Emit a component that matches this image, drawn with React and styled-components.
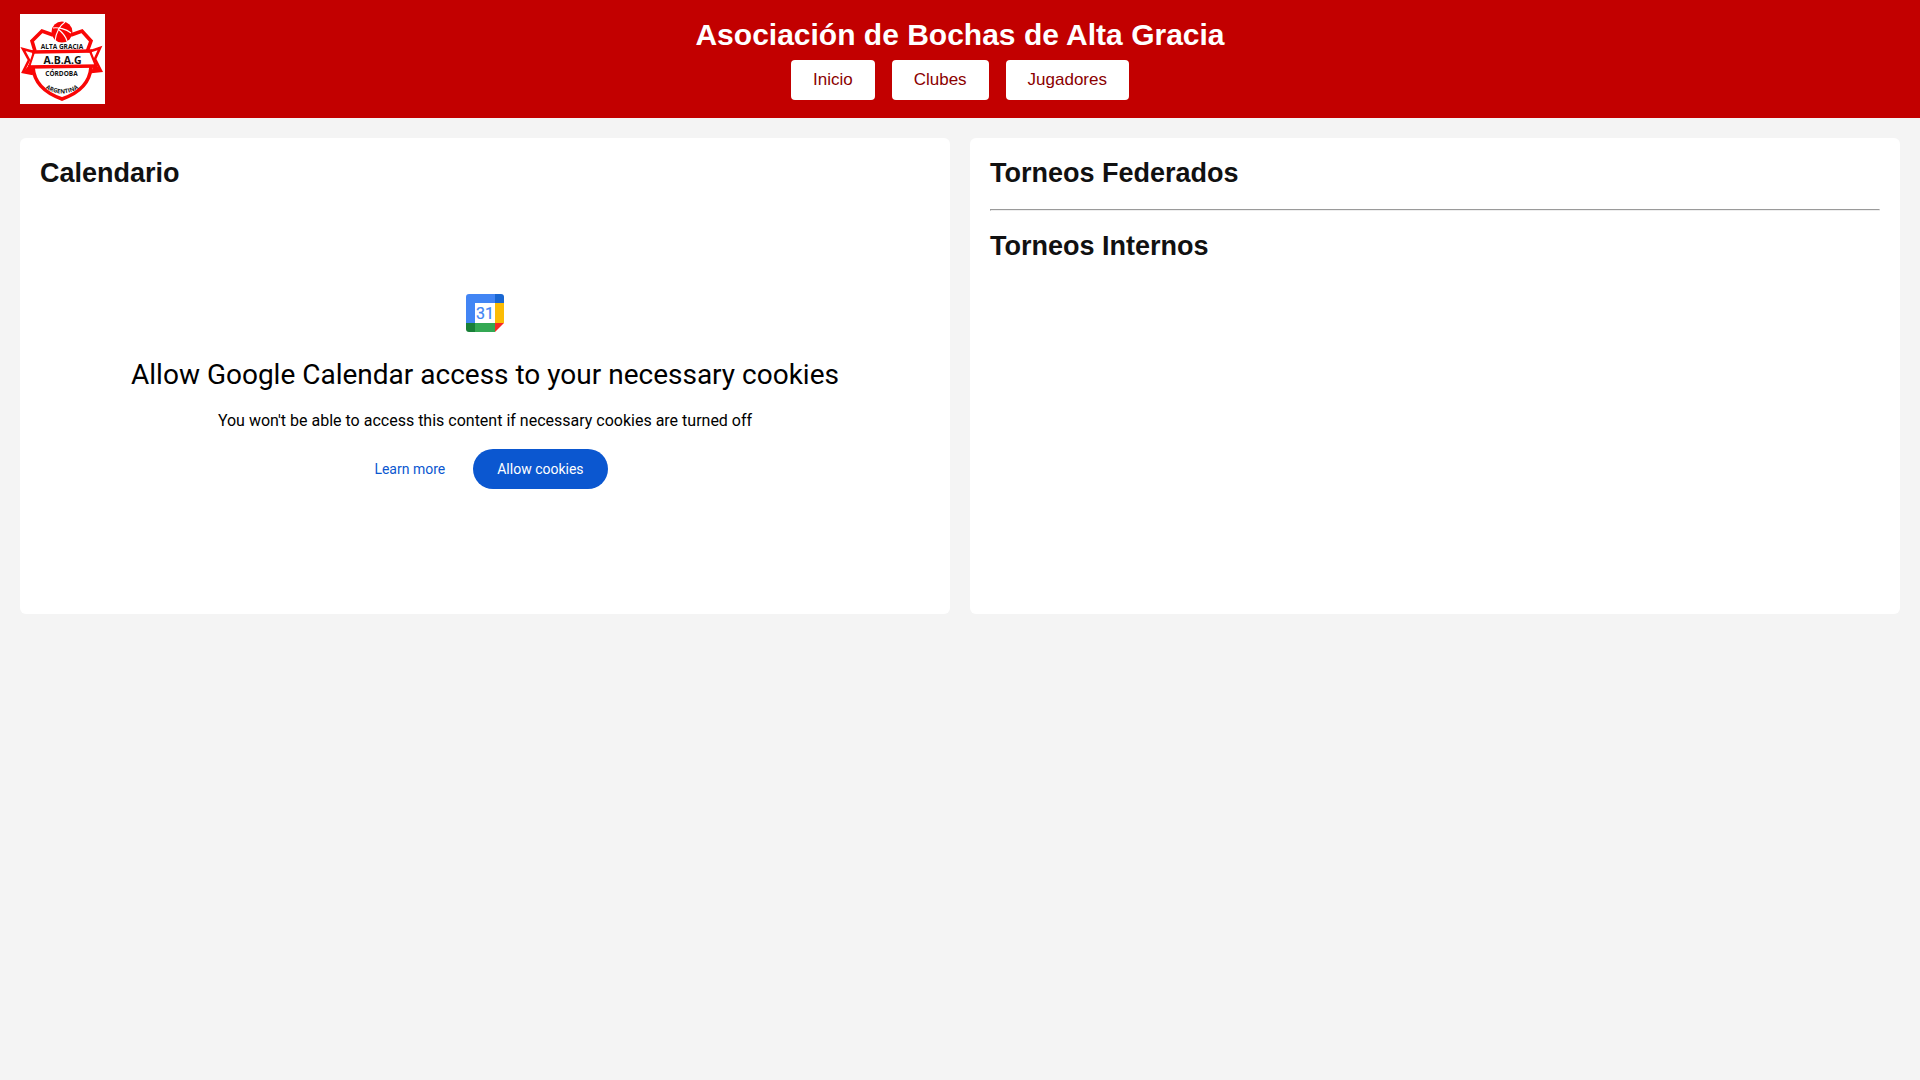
import { Component } from "react";
import styled, { createGlobalStyle } from "styled-components";

const links = ["Inicio", "Clubes", "Jugadores"];

class Logo extends Component{
    render(){
        return(
            <LogoBox viewBox="0 0 170 180" role="img" aria-label="A.B.A.G">
                <rect width="170" height="180" fill="#fff" />
                <g transform="scale(2)">
                    {/* shield */}
                    <path d="M33 21 L22 17 L12 27 L15 37 M51 21 L62 17 L71 27 L67 38 M13 53 C14 68 25 79 42 85 C59 79 70 68 71 53" fill="none" stroke="#f90606" strokeWidth="3.6" />
                    {/* ball */}
                    <circle cx="42" cy="18" r="10.5" fill="#f90606" />
                    <path d="M33 14 C38 13 46 15 51 19 M45 8 C38 13 36 19 35 27 M38 15 C43 19 46 23 47 27" fill="none" stroke="#fff" strokeWidth="1.1" />
                    {/* ribbon */}
                    <path d="M14 38 L3 35 L9 46 L3 58 L13 60 M71 37 L80 34 L75 45 L81 57 L71 58" fill="none" stroke="#f90606" strokeWidth="2.6" />
                    <path d="M3 58 L10 50 L14 60 Z M81 57 L75 49 L71 58 Z" fill="#f90606" />
                    <path d="M12 38 L72 37 M8 53 L77 52" stroke="#f90606" strokeWidth="3.4" />
                    <path d="M14 38 L9 53 M70 37 L76 52" stroke="#f90606" strokeWidth="2.2" />
                    <path id="arc" d="M20 70 Q42 89 64 70" fill="none" />
                </g>
                <LogoText x="84" y="70" fontSize="13">ALTA GRACIA</LogoText>
                <LogoText x="85" y="100" fontSize="21">A.B.A.G</LogoText>
                <LogoText x="83" y="124" fontSize="13">CÓRDOBA</LogoText>
                <g transform="scale(2)">
                    <LogoText fontSize="6"><textPath href="#arc" startOffset="50%">ARGENTINA</textPath></LogoText>
                </g>
            </LogoBox>
        )
    }
}

class CalendarIcon extends Component{
    render(){
        return(
            <IconBox viewBox="0 0 40 40" aria-hidden="true">
                <path d="M30 10 H10 V30 H30 Z" fill="#fff" />
                <path d="M30 39 L39 30 H30 Z" fill="#f72a25" />
                <path d="M39 10 H30 V30 H39 Z" fill="#fbbc04" />
                <path d="M30 30 H10 V39 H30 Z" fill="#34a853" />
                <path d="M1 30 V36 C1 38 2 39 4 39 H10 V30 Z" fill="#188038" />
                <path d="M39 10 V4 C39 2 38 1 36 1 H30 V10 Z" fill="#1967d2" />
                <path d="M30 1 H4 C2 1 1 2 1 4 V30 H10 V10 H30 Z" fill="#4285f4" />
                <text x="20" y="26" textAnchor="middle" fontFamily="Roboto, sans-serif" fontSize="16" stroke="#4285f4" strokeWidth="0.2" fill="#4285f4">31</text>
            </IconBox>
        )
    }
}

class CookieNotice extends Component{
    render(){
        return(
            <Frame>
                <CalendarIcon />
                <NoticeTitle>Allow Google Calendar access to your necessary cookies</NoticeTitle>
                <NoticeText>You won't be able to access this content if necessary cookies are turned off</NoticeText>
                <Actions>
                    <LearnMore href="#">Learn more</LearnMore>
                    <AllowButton type="button">Allow cookies</AllowButton>
                </Actions>
            </Frame>
        )
    }
}

class App extends Component{
    render(){
        return(
            <>
            <GlobalStyle />
            <Header>
                <Logo />
                <HeaderCenter>
                    <Title>Asociación de Bochas de Alta Gracia</Title>
                    <Nav>
                        {links.map((link)=> <NavLink key={link} href="#">{link}</NavLink>)}
                    </Nav>
                </HeaderCenter>
            </Header>
            <Main>
                <Card>
                    <Heading>Calendario</Heading>
                    <CookieNotice />
                </Card>
                <Card>
                    <Heading>Torneos Federados</Heading>
                    <Divider />
                    <Heading>Torneos Internos</Heading>
                </Card>
            </Main>
            </>
        )
    }
}

export default App;

/*----------------styled-component----------------*/
const GlobalStyle = createGlobalStyle`
* { box-sizing: border-box; }
body {
    margin: 0;
    background-color: #f4f4f4;
    color: #111;
    font-family: Arial, "Liberation Sans", sans-serif;
}
`;

const Header = styled.header`
display: grid;
grid-template-columns: 1fr auto 1fr;
align-items: center;
padding: 14px 20px;
background-color: #c20000;
`;

const LogoBox = styled.svg`
display: block;
width: 85px;
height: 90px;
`;

const LogoText = styled.text`
font-family: "Open Sans", "Noto Sans", sans-serif;
font-weight: 700;
text-anchor: middle;
fill: #111;
`;

const HeaderCenter = styled.div`
display: flex;
flex-direction: column;
align-items: center;
gap: 8px;
`;

const Title = styled.h1`
margin: 0;
color: white;
font-size: 30px;
line-height: 34px;
`;

const Nav = styled.nav`
display: flex;
gap: 17px;
`;

const NavLink = styled.a`
padding: 10px 22px;
border-radius: 4px;
background-color: white;
color: #8b0000;
font-size: 17px;
line-height: 20px;
text-decoration: none;
&:hover{background-color: #eee};
`;

const Main = styled.main`
display: grid;
grid-template-columns: 1fr 1fr;
gap: 20px;
padding: 20px;
`;

const Card = styled.section`
padding: 20px;
border-radius: 6px;
background-color: white;
`;

const Heading = styled.h2`
margin: 0;
font-size: 27px;
line-height: 31px;
`;

const Divider = styled.hr`
margin: 20px 0;
border: 1px solid;
border-color: #9a9a9a #eee #eee #9a9a9a;
`;

const Frame = styled.div`
display: flex;
flex-direction: column;
align-items: center;
padding: 104px 0 105px;
color: black;
font-family: Roboto, sans-serif;
text-align: center;
`;

const IconBox = styled.svg`
display: block;
width: 40px;
height: 40px;
`;

const NoticeTitle = styled.div`
margin-top: 24px;
font-size: 28px;
line-height: 36px;
`;

const NoticeText = styled.p`
margin: 16px 0;
font-size: 16px;
line-height: 24px;
`;

const Actions = styled.div`
display: flex;
gap: 16px;
`;

const LearnMore = styled.a`
padding: 10px 12px;
color: #0b57d0;
font-size: 14px;
line-height: 20px;
text-decoration: none;
`;

const AllowButton = styled.button`
padding: 10px 24px;
border: none;
border-radius: 20px;
background-color: #0b57d0;
color: white;
font-family: inherit;
font-size: 14px;
line-height: 20px;
cursor: pointer;
`;
